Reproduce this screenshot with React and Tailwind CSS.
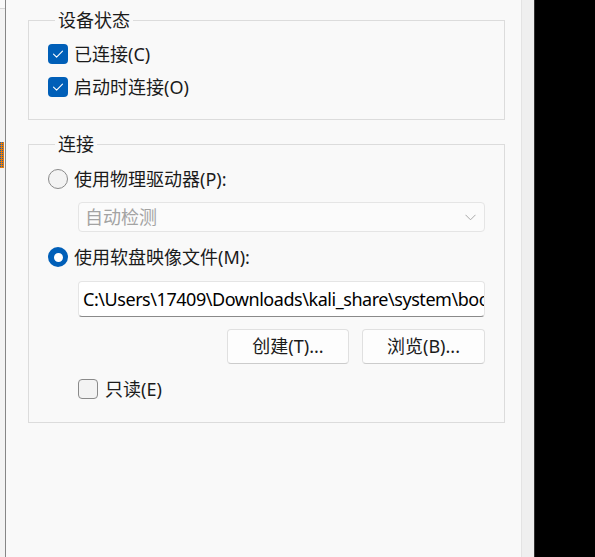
import React from "react";

const font = { fontFamily: '"Noto Sans", "Noto Sans CJK SC", sans-serif' };

function Check({ checked }) {
  return checked ? (
    <div className="flex h-[20px] w-[20px] shrink-0 items-center justify-center rounded-[4px] bg-[#005fb8]">
      <svg width="20" height="20" viewBox="0 0 20 20">
        <path d="M5.5 10.2 L8.6 13.2 L14.5 7.2" fill="none" stroke="#ffffff" strokeWidth="1.1" strokeLinecap="round" strokeLinejoin="round" />
      </svg>
    </div>
  ) : (
    <div className="h-[20px] w-[20px] shrink-0 rounded-[4px] border border-[#8a8a8a] bg-[#f3f3f3]" />
  );
}

function Radio({ checked }) {
  return checked ? (
    <div className="flex h-[20px] w-[20px] shrink-0 items-center justify-center rounded-full bg-[#005fb8]">
      <div className="h-[9px] w-[9px] rounded-full bg-white" />
    </div>
  ) : (
    <div className="h-[20px] w-[20px] shrink-0 rounded-full border border-[#8a8a8a] bg-[#f3f3f3]" />
  );
}

export default function App() {
  return (
    <div className="flex h-[557px] w-[595px] overflow-hidden bg-black text-[18px] text-[#1b1b1b]" style={font}>
      {/* left tree edge */}
      <div className="flex w-[6px] shrink-0 flex-col border-r border-[#868686] bg-[#f3f3f3]">
        <div className="h-[9px] border-b border-[#d6d6d6] bg-[#f9f9f9]" />
        <div className="mt-[133px] h-[26px] w-[4px] bg-[repeating-conic-gradient(#e47c10_0_75%,#1560b0_0_100%)] bg-[length:2px_2px]" />
      </div>

      {/* main panel */}
      <div className="flex w-[516px] shrink-0 flex-col border-r border-[#e3e3e3] bg-[#f9f9f9] pl-[22px] pt-[8px]">
        <fieldset className="box-border h-[112px] w-[477px] border border-[#dcdcdc] pl-[19px] pt-[12px]">
          <legend className="ml-[7px] px-[3px] leading-[24px]">设备状态</legend>
          <div className="flex flex-col gap-[13px]">
            <div className="flex h-[20px] items-center gap-[6px]">
              <Check checked />
              <span className="leading-[20px]">已连接(C)</span>
            </div>
            <div className="flex h-[20px] items-center gap-[6px]">
              <Check checked />
              <span className="leading-[20px]">启动时连接(O)</span>
            </div>
          </div>
        </fieldset>

        <fieldset className="mt-[12px] box-border h-[291px] w-[477px] border border-[#dcdcdc] pl-[19px] pt-[13px]">
          <legend className="ml-[7px] px-[3px] leading-[24px]">连接</legend>
          <div className="flex flex-col">
            <div className="flex h-[20px] items-center gap-[6px]">
              <Radio />
              <span className="leading-[20px]">使用物理驱动器(P):</span>
            </div>
            <div className="mt-[13px] ml-[30px] box-border flex h-[30px] w-[407px] items-center justify-between rounded-[4px] border border-[#e5e5e5] bg-[#fbfbfb] pl-[6px] pr-[8px] text-[#a3a3a3]">
              <span className="leading-[20px]">自动检测</span>
              <svg width="11" height="7" viewBox="0 0 11 7">
                <path d="M0.5 0.8 L5.5 5.8 L10.5 0.8" fill="none" stroke="#a8a8a8" strokeWidth="1" />
              </svg>
            </div>
            <div className="mt-[15px] flex h-[20px] items-center gap-[6px]">
              <Radio checked />
              <span className="leading-[20px]">使用软盘映像文件(M):</span>
            </div>
            <div className="mt-[14px] ml-[30px] box-border flex h-[36px] w-[407px] items-center overflow-hidden whitespace-nowrap rounded-[4px] border border-[#e5e5e5] border-b-[#8a8a8a] bg-white pl-[4px] tracking-[-0.45px] text-black">
              C:\Users\17409\Downloads\kali_share\system\boo
            </div>
            <div className="mt-[12px] ml-[30px] flex w-[407px] justify-end gap-[13px]">
              <div className="box-border flex h-[35px] w-[122px] items-center justify-center rounded-[4px] border border-[#e0e0e0] border-b-[#cccccc] bg-[#fdfdfd]">
                创建(T)...
              </div>
              <div className="box-border flex h-[35px] w-[123px] items-center justify-center rounded-[4px] border border-[#e0e0e0] border-b-[#cccccc] bg-[#fdfdfd]">
                浏览(B)...
              </div>
            </div>
            <div className="mt-[15px] ml-[30px] flex h-[20px] items-center gap-[7px]">
              <Check />
              <span className="leading-[20px]">只读(E)</span>
            </div>
          </div>
        </fieldset>
      </div>

      {/* right edge */}
      <div className="w-[12px] shrink-0 bg-[#efefef]" />
      <div className="w-[1px] shrink-0 bg-[#333333]" />
      <div className="flex-1 bg-black" />
    </div>
  );
}
